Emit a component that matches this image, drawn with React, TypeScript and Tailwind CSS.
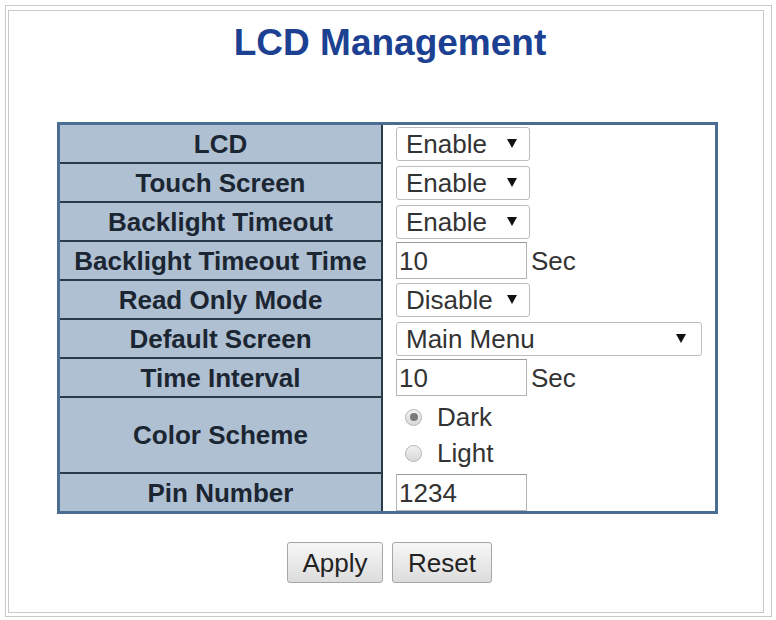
import type { ReactNode } from 'react';

// LCD Management settings panel — label column on steel blue, controls on white.

function Arrow() {
  return (
    <svg width="10" height="9" viewBox="0 0 10 9" className="shrink-0">
      <polygon points="0,0 10,0 5,9" fill="#111" />
    </svg>
  );
}

function Select({ value, wide = false }: { value: string; wide?: boolean }) {
  return (
    <div
      className={`flex h-[34px] items-center justify-between rounded-[3px] border border-[#bdbdbd] bg-white pl-[9px] text-[#333] ${
        wide ? 'w-[306px] pr-[15px]' : 'w-[134px] pr-[12px]'
      }`}
    >
      <span>{value}</span>
      <Arrow />
    </div>
  );
}

function TextBox({ value }: { value: string }) {
  return (
    <div className="flex h-[37px] w-[131px] items-center border border-[#b3b3b3] border-t-[#9a9a9a] bg-white pl-[2px] text-[#333]">
      {value}
    </div>
  );
}

function Radio({ label, checked }: { label: string; checked?: boolean }) {
  return (
    <div className="flex h-[36px] items-center">
      <span className="ml-[9px] flex h-[17px] w-[17px] items-center justify-center rounded-full border border-[#b5b5b5] bg-gradient-to-b from-[#f2f2f2] to-[#d9d9d9]">
        {checked && <span className="h-[8px] w-[8px] rounded-full bg-[#7a7a7a]" />}
      </span>
      <span className="ml-[15px] text-[#333]">{label}</span>
    </div>
  );
}

function Row({ label, first, tall, children }: { label: string; first?: boolean; tall?: boolean; children: ReactNode }) {
  const h = tall ? 'h-[74px]' : 'h-[37px]';
  return (
    <div className="flex">
      <div
        className={`flex w-[323px] items-center justify-center border-r-2 border-[#2a3a48] bg-[#aec0d2] font-bold text-[#1c2632] ${
          first ? h : `${tall ? 'h-[76px]' : 'h-[39px]'} border-t-2 border-t-[#2a3a48]`
        }`}
      >
        {label}
      </div>
      <div
        className={`flex flex-1 items-center pl-[13px] ${
          first ? h : `${tall ? 'h-[76px]' : 'h-[39px]'} border-t-2 border-t-white`
        }`}
      >
        {children}
      </div>
    </div>
  );
}

export default function App() {
  return (
    <div className="h-[620px] w-[776px] bg-white pl-[5px] pt-[5px] text-[26px] leading-none [font-family:'Liberation_Sans',Arial,sans-serif]">
      <div className="h-[612px] w-[767px] border border-[#c9c9c9] pb-[3px] pl-[2px] pr-[7px] pt-[4px]">
        <div className="flex h-full flex-col border border-[#c9c9c9]">
          <h1 className="mt-[13px] pl-[8px] text-center text-[37px] font-bold leading-none text-[#1d4192]">
            LCD Management
          </h1>

          <div className="ml-[48px] mt-[61px] w-[661px] border-[3px] border-[#4b6d91]">
            <Row label="LCD" first>
              <Select value="Enable" />
            </Row>
            <Row label="Touch Screen">
              <Select value="Enable" />
            </Row>
            <Row label="Backlight Timeout">
              <Select value="Enable" />
            </Row>
            <Row label="Backlight Timeout Time">
              <TextBox value="10" />
              <span className="ml-[4px] text-[#333]">Sec</span>
            </Row>
            <Row label="Read Only Mode">
              <Select value="Disable" />
            </Row>
            <Row label="Default Screen">
              <Select value="Main Menu" wide />
            </Row>
            <Row label="Time Interval">
              <TextBox value="10" />
              <span className="ml-[4px] text-[#333]">Sec</span>
            </Row>
            <Row label="Color Scheme" tall>
              <div className="flex flex-col">
                <Radio label="Dark" checked />
                <Radio label="Light" />
              </div>
            </Row>
            <Row label="Pin Number">
              <TextBox value="1234" />
            </Row>
          </div>

          <div className="mt-[28px] flex justify-center gap-[9px] pl-[7px]">
            <button className="h-[41px] w-[96px] rounded-[3px] border border-[#a6a6a6] bg-gradient-to-b from-[#f7f7f7] to-[#dcdcdc] text-[#222]">
              Apply
            </button>
            <button className="h-[41px] w-[100px] rounded-[3px] border border-[#a6a6a6] bg-gradient-to-b from-[#f7f7f7] to-[#dcdcdc] text-[#222]">
              Reset
            </button>
          </div>
        </div>
      </div>
    </div>
  );
}
